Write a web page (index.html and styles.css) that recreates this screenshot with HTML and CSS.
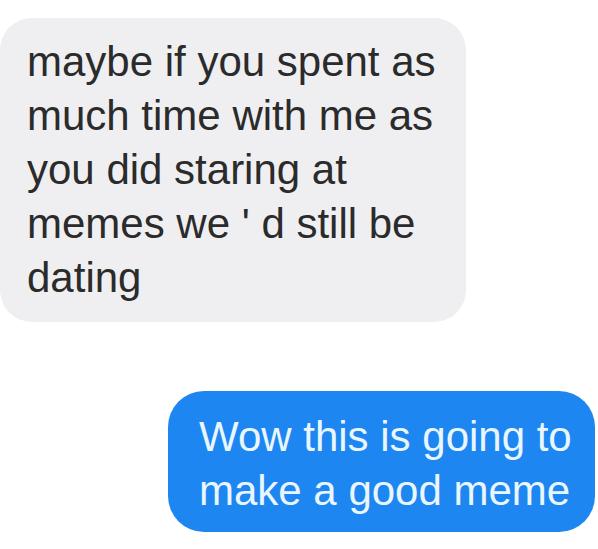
FILE: index.html
```html
<!DOCTYPE html>
<html>
<head>
<meta charset="utf-8">
<link rel="stylesheet" href="styles.css">
</head>
<body>
<div class="chat">
  <div class="bubble received">maybe if you spent as<br>much time with me as<br>you did staring at<br>memes we ' d still be<br>dating</div>
  <div class="bubble sent">Wow this is going to<br>make a good meme</div>
</div>
</body>
</html>
```
FILE: styles.css
```css
html, body {
  margin: 0;
  padding: 0;
  background: #ffffff;
}
.chat {
  display: flex;
  flex-direction: column;
  padding: 18px 3px 0 0;
  gap: 69px;
  font-family: "Liberation Sans", Arial, sans-serif;
  font-size: 42px;
  line-height: 54px;
}
.bubble {
  box-sizing: border-box;
  white-space: nowrap;
}
.received {
  align-self: flex-start;
  width: 466px;
  background: #efeff1;
  color: #2b2b2b;
  border-radius: 32px;
  padding: 17px 10px 17px 27px;
}
.sent {
  align-self: flex-end;
  width: 427px;
  background: #1d86f1;
  color: #eaf6ff;
  border-radius: 36px;
  padding: 19px 10px 14px 31px;
}
```
